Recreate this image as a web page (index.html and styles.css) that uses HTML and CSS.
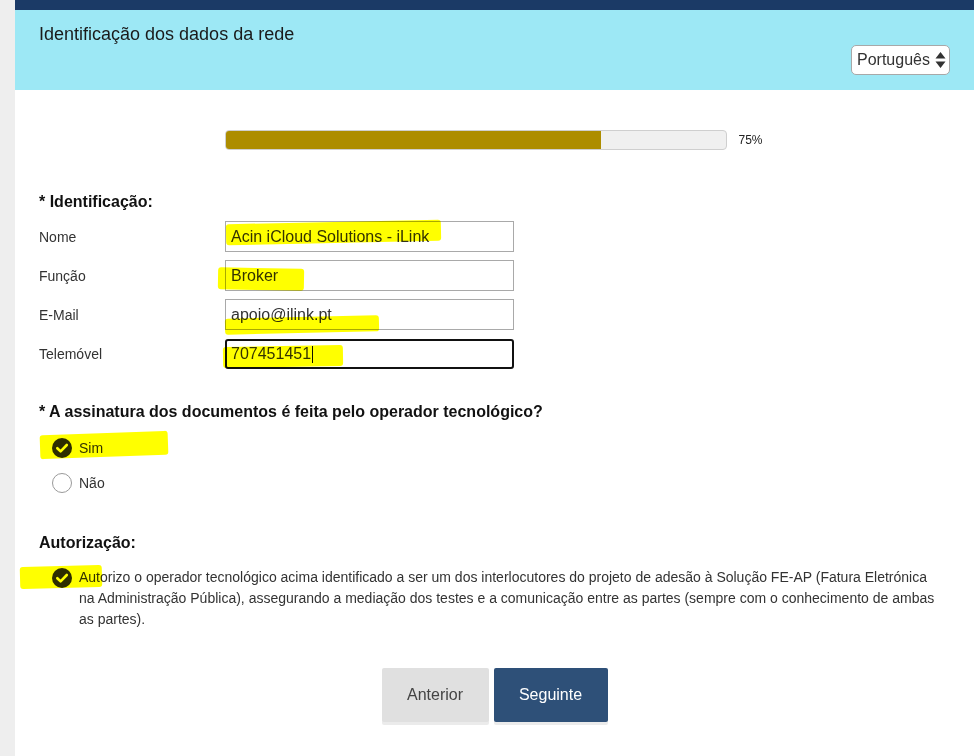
FILE: index.html
```html
<!DOCTYPE html>
<html lang="pt">
<head>
<meta charset="utf-8">
<title>Identificação dos dados da rede</title>
<link rel="stylesheet" href="styles.css">
</head>
<body>
<div class="page">
  <div class="topbar"></div>
  <header class="header">
    <h1 class="title">Identificação dos dados da rede</h1>
    <div class="lang">
      <span>Português</span>
      <svg class="lang-arrows" width="11" height="18" viewBox="0 0 11 18"><path d="M5.5 1 L10.5 7.5 H0.5 Z M5.5 17 L10.5 10.5 H0.5 Z" fill="#333"/></svg>
    </div>
  </header>
  <main class="content">
    <div class="progress-row">
      <div class="progress"><div class="progress-fill" style="width:75%"></div></div>
      <span class="progress-label">75%</span>
    </div>

    <h2 class="section-title">* Identificação:</h2>
    <div class="fields">
      <div class="field"><span class="field-label">Nome</span><div class="input">Acin iCloud Solutions - iLink</div></div>
      <div class="field"><span class="field-label">Função</span><div class="input">Broker</div></div>
      <div class="field"><span class="field-label">E-Mail</span><div class="input">apoio@ilink.pt</div></div>
      <div class="field"><span class="field-label">Telemóvel</span><div class="input input-focus">707451451<span class="caret"></span></div></div>
    </div>

    <h2 class="section-title question">* A assinatura dos documentos é feita pelo operador tecnológico?</h2>
    <div class="options">
      <div class="option">
        <svg class="mark" width="20" height="20" viewBox="0 0 20 20"><circle cx="10" cy="10" r="10" fill="#2e2e2e"/><path d="M5.3 10.2 L8.6 13.4 L14.8 7" fill="none" stroke="#fff" stroke-width="2.6" stroke-linecap="round" stroke-linejoin="round"/></svg>
        <span>Sim</span>
      </div>
      <div class="option">
        <span class="radio-empty"></span>
        <span>Não</span>
      </div>
    </div>

    <h2 class="section-title auth-title">Autorização:</h2>
    <div class="auth">
      <svg class="mark" width="20" height="20" viewBox="0 0 20 20"><circle cx="10" cy="10" r="10" fill="#2e2e2e"/><path d="M5.3 10.2 L8.6 13.4 L14.8 7" fill="none" stroke="#fff" stroke-width="2.6" stroke-linecap="round" stroke-linejoin="round"/></svg>
      <p class="auth-text">Autorizo o operador tecnológico acima identificado a ser um dos interlocutores do projeto de adesão à Solução FE-AP (Fatura Eletrónica na Administração Pública), assegurando a mediação dos testes e a comunicação entre as partes (sempre com o conhecimento de ambas as partes).</p>
    </div>

    <div class="buttons">
      <button class="btn btn-prev">Anterior</button>
      <button class="btn btn-next">Seguinte</button>
    </div>
  </main>
</div>

<div class="hl hl-nome"></div>
<div class="hl hl-funcao"></div>
<div class="hl hl-email"></div>
<div class="hl hl-tel"></div>
<div class="hl hl-sim"></div>
<div class="hl hl-auth"></div>
</body>
</html>
```

FILE: styles.css
```css
* { box-sizing: border-box; }

html, body {
  margin: 0;
  padding: 0;
  background: #eeeeee;
  font-family: "Liberation Sans", Arial, sans-serif;
  color: #222;
}

body { position: relative; min-height: 756px; }

.page {
  margin-left: 15px;
  background: #ffffff;
  min-height: 756px;
}

.topbar {
  height: 10px;
  background: #1b3a66;
}

.header {
  height: 80px;
  background: #9de8f5;
  display: flex;
  justify-content: space-between;
  align-items: flex-start;
  padding: 13px 24px 0 24px;
}

.title {
  margin: 0;
  font-size: 18px;
  font-weight: normal;
  line-height: 22px;
  color: #1a1a1a;
}

.lang {
  margin-top: 22px;
  width: 99px;
  height: 30px;
  background: #fff;
  border: 1px solid #a8a8a8;
  border-radius: 5px;
  display: flex;
  align-items: center;
  justify-content: space-between;
  padding: 0 3px 0 5px;
  font-size: 16px;
  color: #333;
}

.content {
  padding: 40px 24px 30px 24px;
}

.progress-row {
  display: flex;
  align-items: center;
  justify-content: center;
  gap: 11px;
  padding-right: 1px;
}

.progress {
  width: 502px;
  height: 20px;
  background: #f0f0f0;
  border: 1px solid #cfcfcf;
  border-radius: 4px;
  overflow: hidden;
}

.progress-fill {
  height: 100%;
  background: #ad8d00;
}

.progress-label {
  font-size: 12px;
  color: #222;
}

.section-title {
  margin: 43px 0 0 0;
  font-size: 16px;
  font-weight: bold;
  line-height: 18px;
  color: #111;
}

.fields {
  margin-top: 10px;
  display: flex;
  flex-direction: column;
  gap: 8px;
}

.field {
  display: flex;
  align-items: center;
  height: 31px;
}

.field-label {
  width: 186px;
  font-size: 14px;
  color: #333;
}

.input {
  width: 289px;
  height: 31px;
  border: 1px solid #a9a9a9;
  background: #fff;
  font-size: 16px;
  color: #333;
  padding: 0 5px;
  display: flex;
  align-items: center;
}

.fields .field:nth-child(4) { margin-top: 1px; height: 30px; }

.input-focus {
  height: 30px;
  border: 2px solid #111;
  border-radius: 3px;
  padding: 0 4px;
}

.caret {
  display: inline-block;
  width: 1px;
  height: 17px;
  background: #111;
  margin-left: 1px;
}

.question { margin-top: 34px; }

.options {
  margin-top: 17px;
  padding-left: 13px;
  display: flex;
  flex-direction: column;
  gap: 15px;
}

.option {
  display: flex;
  align-items: center;
  gap: 7px;
  font-size: 14px;
  color: #333;
  height: 20px;
}

.mark { flex: none; display: block; }

.radio-empty {
  width: 20px;
  height: 20px;
  border: 1px solid #9a9a9a;
  border-radius: 50%;
  background: #fff;
  flex: none;
}

.auth-title { margin-top: 41px; }

.auth {
  margin-top: 16px;
  padding-left: 13px;
  display: flex;
  align-items: flex-start;
  gap: 7px;
}

.auth-text {
  margin: -1px 0 0 0;
  max-width: 860px;
  font-size: 14px;
  line-height: 21px;
  color: #333;
}

.buttons {
  margin-top: 38px;
  display: flex;
  justify-content: center;
  gap: 5px;
}

.btn {
  height: 54px;
  border: none;
  border-radius: 2px;
  font-family: "Liberation Sans", Arial, sans-serif;
  font-size: 16px;
  box-shadow: 0 3px 0 #ebebeb;
  cursor: pointer;
}

.btn-prev {
  width: 107px;
  background: #e0e0e0;
  color: #444;
}

.btn-next {
  width: 114px;
  background: #2e5078;
  color: #fff;
}

/* Highlighter annotations over the screenshot */
.hl {
  position: absolute;
  background: #ffff00;
  mix-blend-mode: multiply;
  border-radius: 3px;
}
.hl-nome { left: 226px; top: 222px; width: 215px; height: 21px; transform: rotate(-1.2deg); }
.hl-funcao { left: 218px; top: 268px; width: 86px; height: 22px; transform: rotate(1deg); }
.hl-email { left: 225px; top: 317px; width: 154px; height: 16px; transform: rotate(-1.3deg); }
.hl-tel { left: 223px; top: 346px; width: 120px; height: 21px; transform: rotate(-1deg); }
.hl-sim { left: 40px; top: 433px; width: 128px; height: 24px; transform: rotate(-2deg); }
.hl-auth { left: 20px; top: 566px; width: 82px; height: 22px; transform: rotate(-1.5deg); }
```
